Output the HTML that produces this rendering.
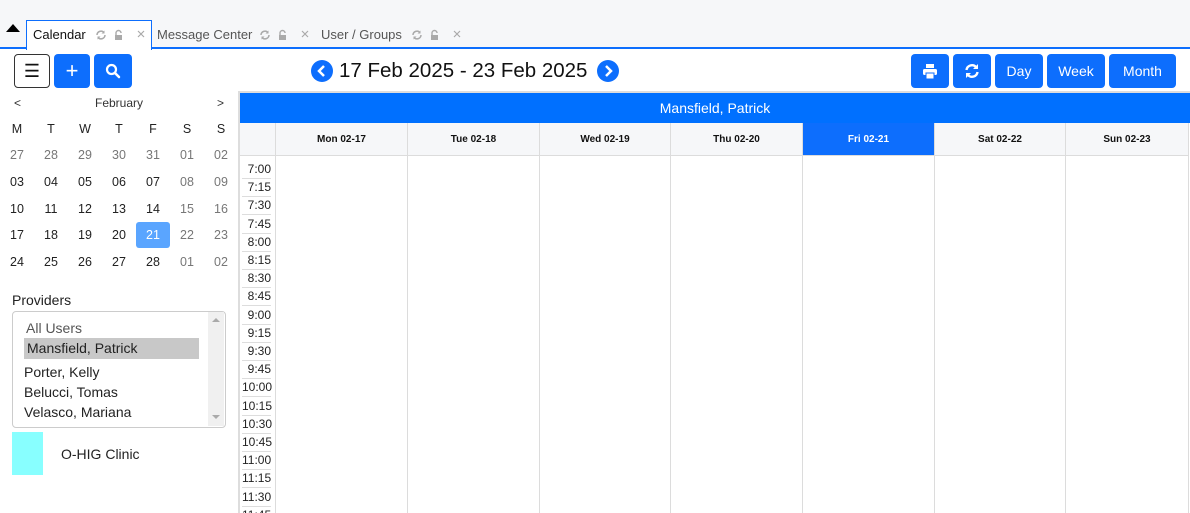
<!DOCTYPE html><html><head><style>
html,body{margin:0;width:1190px;height:513px;overflow:hidden}
body{font-family:"Liberation Sans",sans-serif;background:#fff;position:relative}
.a{position:absolute}
.btn{position:absolute;background:#0d6efd;border-radius:4px;color:#fff;font-size:14px;display:flex;align-items:center;justify-content:center;top:54px;height:34px}
.tab{position:absolute;top:27px;font-size:13px;color:#555}
.cal div{position:absolute;width:34px;text-align:center;font-size:12.5px;color:#222}
.g{color:#777 !important}
.dh{position:absolute;top:123px;height:32px;background:#f6f7f9;border-right:1px solid #dcdcdc;border-bottom:1px solid #dcdcdc;font-size:10px;font-weight:bold;display:flex;align-items:center;justify-content:center;color:#111}
.vl{position:absolute;top:156px;bottom:0;width:1px;background:#dcdcdc}
.t{position:absolute;left:242px;width:29px;height:17px;border-bottom:1px solid #ddd;font-size:12px;text-align:right;color:#222;line-height:17px}
</style></head><body>
<div class="a" style="left:0;top:0;width:1190px;height:48px;background:#f6f7f9"></div>
<div class="a" style="left:0;top:47px;width:1190px;height:2px;background:#0d6efd"></div>
<div class="a" style="left:6px;top:24px;width:0;height:0;border-left:7px solid transparent;border-right:7px solid transparent;border-bottom:8px solid #000"></div>
<div class="a" style="left:26px;top:20px;width:124px;height:29px;background:#fff;border:1px solid #0d6efd;border-bottom:none"></div>
<div class="tab" style="left:33px;color:#111">Calendar</div>
<div class="tab" style="left:157px">Message Center</div>
<div class="tab" style="left:321px">User / Groups</div>
<svg class="a" style="left:0;top:0" width="480" height="48">
<defs><g id="ics" fill="#aaa" stroke="#aaa">
<path d="M1 5a4 4 0 0 1 7-2.5M9 5a4 4 0 0 1-7 2.5" fill="none" stroke-width="1.5"/><path d="M8.5 0.5v3h-3z M1.5 9.5v-3h3z" stroke="none"/>
<path d="M20 5v-2a2.5 2.5 0 0 1 5 0" fill="none" stroke-width="1.4"/><rect x="19" y="5" width="7" height="5" stroke="none"/>
<path d="M42 1l6 6M48 1l-6 6" fill="none" stroke-width="1.2"/></g></defs>
<use href="#ics" x="96" y="30"/><use href="#ics" x="260" y="30"/><use href="#ics" x="412" y="30"/>
</svg>

<div class="btn" style="left:14px;width:34px;height:32px;background:#fff;border:1px solid #333;color:#111;font-size:18px">☰</div>
<div class="btn" style="left:54px;width:36px;font-size:22px">+</div>
<div class="btn" style="left:94px;width:38px"><svg width="16" height="16" viewBox="0 0 16 16"><circle cx="6.5" cy="6.5" r="4.5" fill="none" stroke="#fff" stroke-width="2.2"/><path d="M10 10l4 4" stroke="#fff" stroke-width="2.5" stroke-linecap="round"/></svg></div>

<svg class="a" style="left:311px;top:60px" width="22" height="22"><circle cx="11" cy="11" r="11" fill="#0d6efd"/><path d="M13 6l-5 5 5 5" fill="none" stroke="#fff" stroke-width="2.5"/></svg>
<div class="a" style="left:339px;top:59px;font-size:20.5px;color:#111">17 Feb 2025 - 23 Feb 2025</div>
<svg class="a" style="left:597px;top:60px" width="22" height="22"><circle cx="11" cy="11" r="11" fill="#0d6efd"/><path d="M9 6l5 5-5 5" fill="none" stroke="#fff" stroke-width="2.5"/></svg>

<div class="btn" style="left:911px;width:38px"><svg width="16" height="15" viewBox="0 0 16 15"><rect x="4" y="0" width="8" height="4" fill="#fff"/><rect x="1" y="5" width="14" height="6" rx="1.5" fill="#fff"/><rect x="4" y="9" width="8" height="6" fill="#fff" stroke="#0d6efd" stroke-width="1"/></svg></div>
<div class="btn" style="left:953px;width:38px"><svg width="16" height="16" viewBox="0 0 16 16"><path d="M2.5 7a5.5 5.5 0 0 1 9.5-3M13.5 9a5.5 5.5 0 0 1-9.5 3" fill="none" stroke="#fff" stroke-width="2.4"/><path d="M14 1v5h-5z M2 15v-5h5z" fill="#fff"/></svg></div>
<div class="btn" style="left:995px;width:48px">Day</div>
<div class="btn" style="left:1047px;width:58px">Week</div>
<div class="btn" style="left:1109px;width:67px">Month</div>

<div class="a" style="left:14px;top:96px;font-size:12px;color:#333">&lt;</div>
<div class="a" style="left:95px;top:96px;font-size:12px;color:#333">February</div>
<div class="a" style="left:217px;top:96px;font-size:12px;color:#333">&gt;</div>
<div class="cal">
<div style="left:0;top:122px">M</div><div style="left:34px;top:122px">T</div><div style="left:68px;top:122px">W</div><div style="left:102px;top:122px">T</div><div style="left:136px;top:122px">F</div><div style="left:170px;top:122px">S</div><div style="left:204px;top:122px">S</div>
<div class="g" style="left:0;top:148px">27</div><div class="g" style="left:34px;top:148px">28</div><div class="g" style="left:68px;top:148px">29</div><div class="g" style="left:102px;top:148px">30</div><div class="g" style="left:136px;top:148px">31</div><div class="g" style="left:170px;top:148px">01</div><div class="g" style="left:204px;top:148px">02</div>
<div style="left:0;top:175px">03</div><div style="left:34px;top:175px">04</div><div style="left:68px;top:175px">05</div><div style="left:102px;top:175px">06</div><div style="left:136px;top:175px">07</div><div class="g" style="left:170px;top:175px">08</div><div class="g" style="left:204px;top:175px">09</div>
<div style="left:0;top:202px">10</div><div style="left:34px;top:202px">11</div><div style="left:68px;top:202px">12</div><div style="left:102px;top:202px">13</div><div style="left:136px;top:202px">14</div><div class="g" style="left:170px;top:202px">15</div><div class="g" style="left:204px;top:202px">16</div>
<div style="left:0;top:228px">17</div><div style="left:34px;top:228px">18</div><div style="left:68px;top:228px">19</div><div style="left:102px;top:228px">20</div><div style="left:136px;top:222px;height:26px;line-height:26px;background:#5aa5ff;border-radius:3px;color:#fff">21</div><div class="g" style="left:170px;top:228px">22</div><div class="g" style="left:204px;top:228px">23</div>
<div style="left:0;top:255px">24</div><div style="left:34px;top:255px">25</div><div style="left:68px;top:255px">26</div><div style="left:102px;top:255px">27</div><div style="left:136px;top:255px">28</div><div class="g" style="left:170px;top:255px">01</div><div class="g" style="left:204px;top:255px">02</div>
</div>

<div class="a" style="left:12px;top:292px;font-size:14px;color:#222">Providers</div>
<div class="a" style="left:12px;top:311px;width:212px;height:115px;border:1px solid #ccc;border-radius:4px"></div>
<div class="a" style="left:208px;top:312px;width:16px;height:114px;background:#f0f0f0"></div>
<div class="a" style="left:212px;top:318px;border-left:4px solid transparent;border-right:4px solid transparent;border-bottom:4px solid #aaa"></div>
<div class="a" style="left:212px;top:415px;border-left:4px solid transparent;border-right:4px solid transparent;border-top:4px solid #aaa"></div>
<div class="a" style="left:26px;top:320px;font-size:14px;color:#555">All Users</div>
<div class="a" style="left:24px;top:338px;width:175px;height:21px;background:#c8c8c8"></div>
<div class="a" style="left:27px;top:340px;font-size:14px;color:#222">Mansfield, Patrick</div>
<div class="a" style="left:24px;top:364px;font-size:14px;color:#222">Porter, Kelly</div>
<div class="a" style="left:24px;top:384px;font-size:14px;color:#222">Belucci, Tomas</div>
<div class="a" style="left:24px;top:404px;font-size:14px;color:#222">Velasco, Mariana</div>
<div class="a" style="left:12px;top:432px;width:31px;height:43px;background:#88ffff"></div>
<div class="a" style="left:61px;top:446px;font-size:14px;color:#222">O-HIG Clinic</div>

<div class="a" style="left:238px;top:91px;width:952px;height:2px;background:#ddd"></div>
<div class="a" style="left:238px;top:91px;width:2px;height:422px;background:#ddd"></div>
<div class="a" style="left:240px;top:93px;width:950px;height:30px;background:#0070ff;color:#fff;font-size:14px;text-align:center;line-height:30px">Mansfield, Patrick</div>
<div class="dh" style="left:240px;width:35px"></div>
<div class="dh" style="left:276px;width:131px">Mon 02-17</div>
<div class="dh" style="left:408px;width:131px">Tue 02-18</div>
<div class="dh" style="left:540px;width:130px">Wed 02-19</div>
<div class="dh" style="left:671px;width:131px">Thu 02-20</div>
<div class="dh" style="left:803px;width:131px;background:#0d6efd;color:#fff">Fri 02-21</div>
<div class="dh" style="left:935px;width:130px">Sat 02-22</div>
<div class="dh" style="left:1066px;width:122px">Sun 02-23</div>
<div class="vl" style="left:275px"></div><div class="vl" style="left:407px"></div><div class="vl" style="left:539px"></div><div class="vl" style="left:670px"></div><div class="vl" style="left:802px"></div><div class="vl" style="left:934px"></div><div class="vl" style="left:1065px"></div><div class="vl" style="left:1188px"></div>
<div class="t" style="top:161px">7:00</div><div class="t" style="top:179.2px">7:15</div><div class="t" style="top:197.4px">7:30</div><div class="t" style="top:215.6px">7:45</div><div class="t" style="top:233.8px">8:00</div><div class="t" style="top:252px">8:15</div><div class="t" style="top:270.2px">8:30</div><div class="t" style="top:288.4px">8:45</div><div class="t" style="top:306.6px">9:00</div><div class="t" style="top:324.8px">9:15</div><div class="t" style="top:343px">9:30</div><div class="t" style="top:361.2px">9:45</div><div class="t" style="top:379.4px">10:00</div><div class="t" style="top:397.6px">10:15</div><div class="t" style="top:415.8px">10:30</div><div class="t" style="top:434px">10:45</div><div class="t" style="top:452.2px">11:00</div><div class="t" style="top:470.4px">11:15</div><div class="t" style="top:488.6px">11:30</div><div class="t" style="top:506.8px">11:45</div>
</body></html>
